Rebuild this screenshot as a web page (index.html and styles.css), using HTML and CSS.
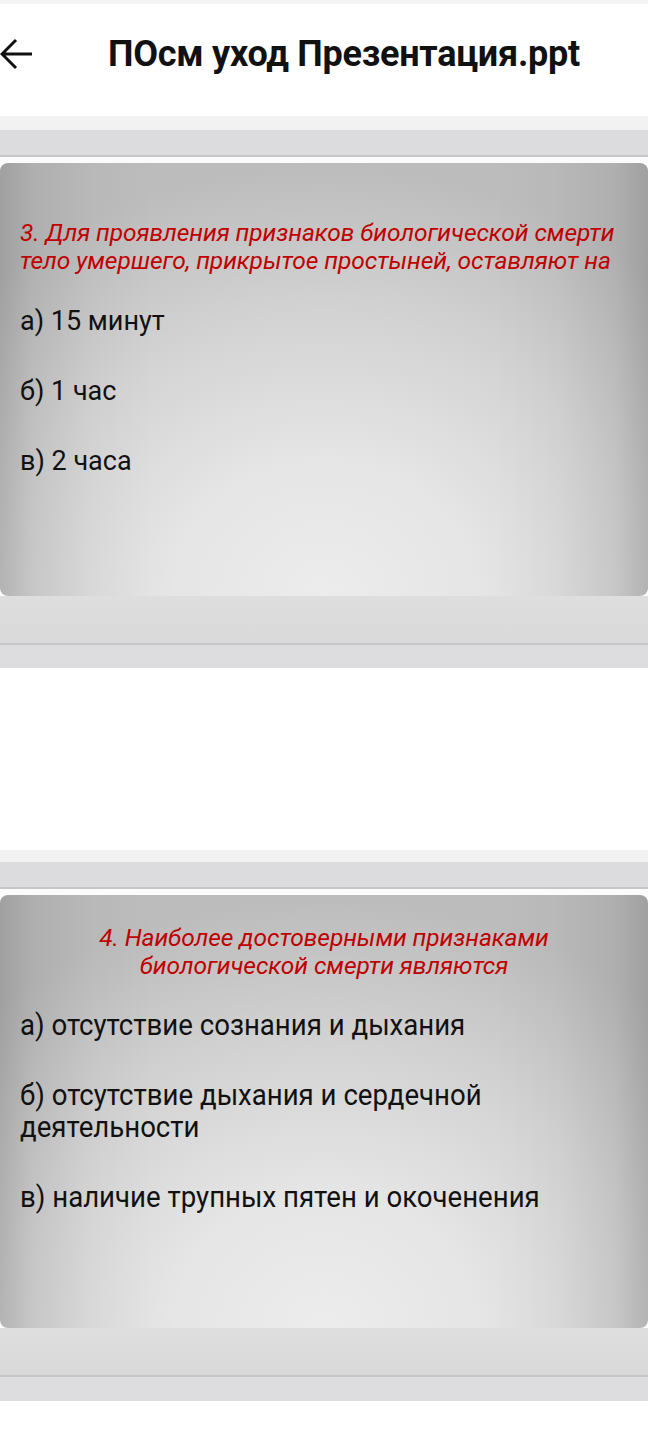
FILE: index.html
```html
<!DOCTYPE html>
<html lang="ru">
<head>
<meta charset="utf-8">
<link rel="stylesheet" href="styles.css">
</head>
<body>
<div class="topstrip"></div>
<header class="appbar">
  <svg class="back" width="34" height="34" viewBox="0 0 34 34" aria-hidden="true">
    <path d="M32 17 H3 M16 3 L2 17 L16 31" fill="none" stroke="#111" stroke-width="3" stroke-linecap="butt" stroke-linejoin="miter"/>
  </svg>
  <h1 class="title">ПОсм уход Презентация.ppt</h1>
</header>

<section class="page first">
  <div class="band-a"></div>
  <div class="band-b"></div>
  <div class="rule"></div>
  <div class="gapw"></div>
  <div class="slide slide-one">
    <p class="q q-left">3. Для проявления признаков биологической смерти тело умершего, прикрытое простыней, оставляют на</p>
    <ul class="answers answers-one">
      <li>а) 15 минут</li>
      <li>б) 1 час</li>
      <li>в) 2 часа</li>
    </ul>
  </div>
  <div class="band-c"></div>
  <div class="rule"></div>
  <div class="band-d"></div>
</section>

<div class="spacer"></div>

<section class="page second">
  <div class="band-a short"></div>
  <div class="band-b"></div>
  <div class="rule"></div>
  <div class="gapw"></div>
  <div class="slide slide-two">
    <p class="q q-center">4. Наиболее достоверными признаками<br>биологической смерти являются</p>
    <ul class="answers answers-two">
      <li>а) отсутствие сознания и дыхания</li>
      <li>б) отсутствие дыхания и сердечной<br>деятельности</li>
      <li>в) наличие трупных пятен и окоченения</li>
    </ul>
  </div>
  <div class="band-c"></div>
  <div class="rule"></div>
  <div class="band-d"></div>
</section>
</body>
</html>
```

FILE: styles.css
```css
* { box-sizing: border-box; }
html, body { margin: 0; padding: 0; background: #ffffff; }
body { width: 648px; font-family: Roboto, "Noto Sans", sans-serif; }

.topstrip { height: 4px; background: #f4f4f4; }

.appbar {
  height: 112px;
  background: #ffffff;
  display: flex;
  align-items: center;
}
.back { display: block; margin-top: -12px; }
.title {
  margin: -13px 0 0 74px;
  font-family: Roboto, "Noto Sans", sans-serif;
  font-weight: 700;
  font-size: 36px;
  letter-spacing: -0.25px;
  color: #111111;
}

.band-a { height: 14px; background: #f2f2f2; }
.band-a.short { height: 12px; }
.band-b { height: 25px; background: #dcdcde; }
.rule { height: 2px; background: #c6c6c8; }
.gapw { height: 6px; background: #fbfbfb; }
.band-c { height: 47px; background: linear-gradient(#dedede, #d9d9d9); }
.band-d { height: 23px; background: #dddde0; }
.second .band-d { height: 24px; }

.spacer { height: 182px; }

.slide {
  height: 433px;
  border-radius: 8px;
  background:
    linear-gradient(90deg, rgba(0,0,0,0.15) 0%, rgba(0,0,0,0.07) 5%, rgba(0,0,0,0.02) 14%, rgba(0,0,0,0) 24%, rgba(0,0,0,0) 76%, rgba(0,0,0,0.02) 86%, rgba(0,0,0,0.07) 95%, rgba(0,0,0,0.15) 100%),
    radial-gradient(ellipse 75% 100% at 50% 100%, #ececec 0%, #e6e6e6 30%, #d3d3d3 65%, #c2c2c2 90%, #bcbcbc 100%);
  background-color: #bcbcbc;
  padding: 0 20px;
  overflow: hidden;
}

.q {
  margin: 0;
  color: #c00000;
  font-family: Roboto, sans-serif;
  font-style: italic;
  font-size: 24.6px;
  line-height: 28px;
  letter-spacing: -0.1px;
}
.q-left { padding-top: 56px; }
.q-center { padding-top: 29px; text-align: center; }

.answers { list-style: none; margin: 0; padding: 0; color: #111111; }
.answers-one { margin-top: 30px; font-family: Roboto, sans-serif; font-size: 27px; line-height: 32px; }
.answers-one li { margin-bottom: 38px; }
.answers-two {
  margin-top: 29px;
  font-family: Roboto, sans-serif;
  font-size: 30px;
  line-height: 32px;
  transform: scaleX(0.92);
  transform-origin: left top;
  width: 660px;
}
.answers-two li { margin-bottom: 38px; }
```
